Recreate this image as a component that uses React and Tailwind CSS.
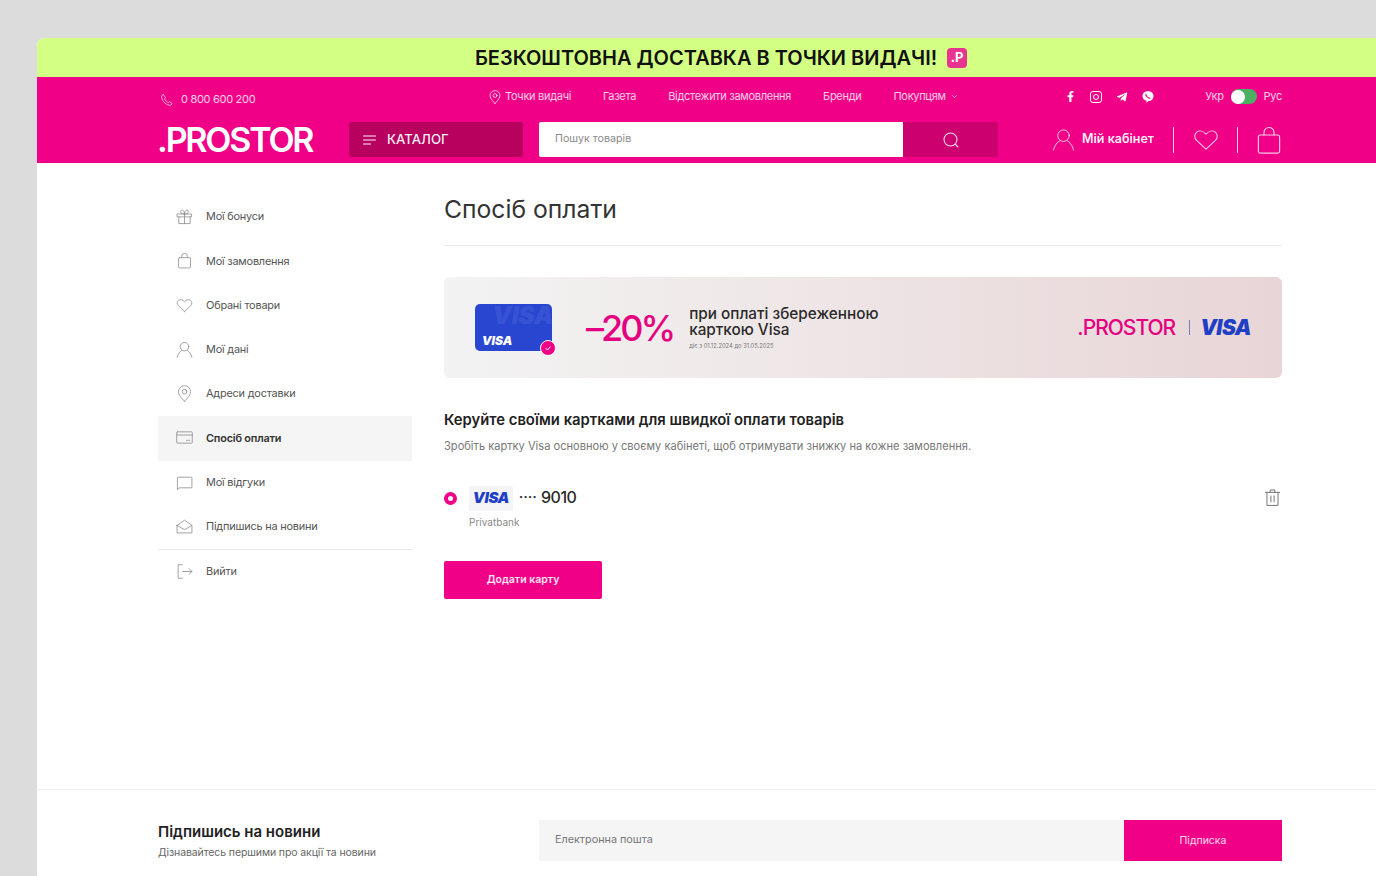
import React from "react";
import { FaFacebookF, FaTelegramPlane } from "react-icons/fa";
import { ChevronDown } from "lucide-react";

// Тонкие иконки: все рисуются в боксе 24x24, обводка берётся из currentColor
const Icon = ({ size = 18, sw = 1.2, className = "", children }) => (
  <svg
    width={size}
    height={size}
    viewBox="0 0 24 24"
    fill="none"
    stroke="currentColor"
    strokeWidth={sw}
    strokeLinecap="round"
    strokeLinejoin="round"
    className={className}
  >
    {children}
  </svg>
);

const GiftIcon = (p) => (
  <Icon {...p}>
    <path d="M2 8.500h20v4H2zM4 12.500V22h16v-9.500M12 8.500V22" />
    <path d="M12 8.500C9 8.500 6.500 7.500 6.500 5.200 6.500 3.500 8 2.500 9.300 3 11 3.700 12 6 12 8.500ZM12 8.500c3 0 5.500-1 5.500-3.300 0-1.700-1.500-2.700-2.800-2.200C13 3.700 12 6 12 8.500Z" />
  </Icon>
);
const BagIcon = (p) => (
  <Icon {...p}>
    <rect x="3.500" y="8" width="17" height="14.500" rx="1.500" />
    <path d="M8 8V6a4 4 0 0 1 8 0v2" />
  </Icon>
);
const HeartIcon = (p) => (
  <Icon {...p}>
    <path d="M12 20.500 3.300 12.300C.9 9.900 1.200 6.400 3.500 4.700c2.500-1.800 6-1.100 8.500 2 2.500-3.100 6-3.800 8.500-2 2.300 1.700 2.600 5.200.2 7.600L12 20.500Z" />
  </Icon>
);
const UserIcon = (p) => (
  <Icon {...p}>
    <circle cx="12" cy="8" r="6" />
    <path d="M1.500 23c1-4.500 4.500-9 6.300-9.500M22.500 23c-1-4.500-4.500-9-6.300-9.500" />
  </Icon>
);
const PinIcon = (p) => (
  <Icon {...p}>
    <path d="M12 23c-1.500-2-8.500-7.500-8.500-13.500a8.500 8.500 0 0 1 17 0C20.500 15.500 13.500 21 12 23Z" />
    <circle cx="12" cy="9.500" r="3.300" />
  </Icon>
);
const CardIcon = (p) => (
  <Icon {...p}>
    <rect x="1" y="4" width="22" height="16" rx="1" />
    <path d="M1 8.500h22M15 16h1.500M18 16h1.500" />
  </Icon>
);
const CommentIcon = (p) => (
  <Icon {...p}>
    <path d="M2 21.500V5.500a1 1 0 0 1 1-1h18.500a1 1 0 0 1 1 1v13a1 1 0 0 1-1 1H4.500L2 21.500Z" />
  </Icon>
);
const EnvelopeIcon = (p) => (
  <Icon {...p}>
    <path d="M1.500 10.500 12 3l10.500 7.500V21h-21V10.500Z" />
    <path d="m1.500 10.500 10.500 6 10.500-6" />
  </Icon>
);
const ExitIcon = (p) => (
  <Icon {...p}>
    <path d="M9 2.500H3V21.500h6M9.500 12h13M18.500 8l4 4-4 4" />
  </Icon>
);
const PhoneIcon = (p) => (
  <Icon {...p}>
    <path d="M5.500 2.500 3 5c-.8 3 .8 7.500 4.200 11s8 5.500 11.300 4.800l2.500-2.500-4.300-3.300-2.400 1.500c-2.500-1-5.500-4-6.500-6.500l1.500-2.400L5.500 2.500Z" />
  </Icon>
);
const TrashIcon = (p) => (
  <Icon {...p}>
    <path d="M3 5.500h18M5 5.500V22h14V5.500M9 5.500V2.500h6v3M10 10v7.500M14 10v7.500" />
  </Icon>
);

// Viber: залитый пузырь с трубкой цвета шапки
const ViberIcon = () => (
  <svg width="12" height="12" viewBox="0 0 12 12">
    <path
      fill="#fff"
      d="M6 .3c3.300 0 5.500 1.500 5.500 5 0 3-2 4.700-5 4.700l-2 1.700V9.700C1.700 9 .5 7.500.5 5.300.5 1.800 2.700.3 6 .3Z"
    />
    <path
      fill="none"
      stroke="#ef0087"
      strokeWidth="1.300"
      strokeLinecap="round"
      d="M3.900 3.300c.1 1.900 1.900 3.700 3.900 3.900"
    />
  </svg>
);

const menu = [
  { label: "Мої бонуси", icon: GiftIcon },
  { label: "Мої замовлення", icon: BagIcon },
  { label: "Обрані товари", icon: HeartIcon },
  { label: "Мої дані", icon: UserIcon },
  { label: "Адреси доставки", icon: PinIcon },
  { label: "Спосіб оплати", icon: CardIcon, active: true },
  { label: "Мої відгуки", icon: CommentIcon },
  { label: "Підпишись на новини", icon: EnvelopeIcon, divider: true },
  { label: "Вийти", icon: ExitIcon },
];

const VisaMark = ({ className }) => (
  <span className={`font-black italic tracking-tight text-[#1f3fc4] ${className}`}>VISA</span>
);

const TopBar = () => (
  <div className="flex h-[45px] items-center text-[11px] tracking-[-0.300px] text-white/80">
    <div className="flex w-[330px] items-center gap-[7px] pl-[2px]">
      <PhoneIcon size={14} sw={1.400} />
      <span>0 800 600 200</span>
    </div>
    <nav className="flex items-center gap-8 pb-[6px]">
      <a className="flex items-center gap-[3px]">
        <PinIcon size={14} sw={1.500} />
        Точки видачі
      </a>
      <a>Газета</a>
      <a>Відстежити замовлення</a>
      <a>Бренди</a>
      <a className="flex items-center gap-1">
        Покупцям
        <ChevronDown size={9} strokeWidth={2} />
      </a>
    </nav>
    <div className="ml-[106px] flex items-center gap-[14px] pb-[6px] text-white">
      <FaFacebookF size={11} />
      <span className="relative flex h-[12px] w-[12px] items-center justify-center rounded-[3px] border border-white">
        <span className="h-[6px] w-[6px] rounded-full border border-white" />
      </span>
      <FaTelegramPlane size={12} />
      <ViberIcon />
    </div>
    <div className="ml-auto flex items-center gap-[7px] pb-[6px]">
      <span>Укр</span>
      <span className="flex h-[15px] w-[26px] items-center rounded-full bg-[#4caf64]">
        <span className="h-[14px] w-[14px] rounded-full bg-white" />
      </span>
      <span>Рус</span>
    </div>
  </div>
);

const MainBar = () => (
  <div className="flex h-[35px] items-center">
    <div className="-ml-[1px] w-[192px] text-[34px] leading-none font-semibold tracking-[-2.200px] text-white">
      .PROSTOR
    </div>
    <button className="flex h-full w-[174px] items-center gap-[11px] rounded-[2px] bg-[#b8005f] pl-[14px] text-[13.200px] font-medium text-white/95">
      <svg width="13" height="10" viewBox="0 0 13 10" stroke="currentColor" strokeWidth="1.100" strokeLinecap="round">
        <path d="M.5 1h12M.5 5h12M.5 9h7" />
      </svg>
      КАТАЛОГ
    </button>
    <div className="ml-4 flex h-full w-[459px]">
      <div className="flex flex-1 items-center rounded-l-[2px] bg-white pl-4 text-[10.700px] text-[#8a8a8a]">
        Пошук товарів
      </div>
      <button className="flex w-[95px] items-center justify-center rounded-r-[2px] bg-[#cc006f] text-white/85">
        <svg width="18" height="18" viewBox="0 0 18 18" fill="none" stroke="currentColor" strokeWidth="1.100" strokeLinecap="round">
          <circle cx="8.500" cy="8.500" r="6.500" />
          <path d="m13.500 13.500 2.500 2.500" />
        </svg>
      </button>
    </div>
    <div className="-mr-[2px] ml-auto flex h-full items-center text-white/80">
      <UserIcon size={23} sw={1} />
      <span className="ml-[7px] text-[12.500px] font-semibold text-white/95">Мій кабінет</span>
      <span className="mx-[19px] h-[26px] w-px bg-white/80" />
      <HeartIcon size={26} sw={1} />
      <span className="mr-[16px] ml-[18px] h-[26px] w-px bg-white/80" />
      <BagIcon size={30} sw={0.900} />
    </div>
  </div>
);

const Sidebar = () => (
  <aside className="w-[254px] shrink-0 pt-[32px]">
    {menu.map(({ label, icon: MenuIcon, active, divider }) => (
      <div
        key={label}
        className={`flex items-center gap-[11px] pb-[1px] pl-[15px] text-[10.900px] tracking-[-0.200px] ${
          active ? "bg-[#f5f5f5] font-semibold text-[#333]" : "text-[#555]"
        } ${divider ? "h-[45px] border-b border-[#e9e9e9]" : "h-[44.250px]"}`}
      >
        <span className="flex w-[22px] justify-center text-[#8a8a8a]">
          <MenuIcon size={17} sw={1.100} />
        </span>
        {label}
      </div>
    ))}
  </aside>
);

const PromoBanner = () => (
  <div className="mt-[31px] flex h-[101px] items-center rounded-md bg-gradient-to-r from-[#f3f3f3] to-[#e8d5d7] px-[31px]">
    <div className="relative h-[47px] w-[77px] overflow-hidden rounded-[5px] bg-[#2846d0]">
      <span className="absolute -top-[6px] -right-[1px] text-[24px] font-black text-white/[0.07] italic">VISA</span>
      <span className="absolute bottom-[1px] left-[7px] text-[12px] font-black text-white italic">VISA</span>
    </div>
    <span className="relative mt-[40px] -ml-[12px] flex h-[16px] w-[16px] items-center justify-center rounded-full border border-white bg-[#ef0087] text-white">
      <svg width="8" height="8" viewBox="0 0 8 8" fill="none" stroke="currentColor" strokeWidth="1">
        <path d="m1.500 4 2 2 3-3.500" />
      </svg>
    </span>
    <div className="ml-[30px] text-[36px] leading-none font-medium tracking-[-3px] text-[#e5007f]">–20%</div>
    <div className="ml-[16px] text-[#2a2a2a]">
      <p className="text-[15.300px] leading-[16px] font-medium">
        при оплаті збереженною
        <br />
        карткою Visa
      </p>
      <p className="mt-[5px] text-[5.800px] leading-[6px] text-[#777]">діє з 01.12.2024 до 31.05.2025</p>
    </div>
    <div className="ml-auto flex items-center">
      <span className="text-[21px] font-medium tracking-[-1px] text-[#e5007f]">.PROSTOR</span>
      <span className="mr-[10px] ml-[14px] h-[15px] w-px bg-[#7b7fb5]" />
      <VisaMark className="text-[21px]" />
    </div>
  </div>
);

const SavedCard = () => (
  <div className="mt-[32px] flex items-start">
    <span className="mt-[6px] h-[13px] w-[13px] rounded-full border-[4px] border-[#ef0087] bg-white" />
    <div className="ml-3">
      <div className="flex items-center">
        <span className="flex h-[25px] w-[44px] items-center justify-center rounded-[2px] bg-[#f4f4f6]">
          <VisaMark className="text-[15px]" />
        </span>
        <span className="-mt-[3px] ml-[6px] flex items-center gap-[4px] text-[16px] font-medium tracking-[-0.500px] text-[#2a2a2a]">
          <span className="text-[11px] font-black tracking-[0.400px]">····</span>
          9010
        </span>
      </div>
      <p className="mt-[4px] text-[10px] text-[#8a8a8a]">Privatbank</p>
    </div>
    <TrashIcon size={19} sw={1.200} className="mt-[2px] ml-auto text-[#6f6f6f]" />
  </div>
);

const Content = () => (
  <main className="ml-8 flex-1 pt-[28px]">
    <h1 className="border-b border-[#ebebeb] pb-[18px] text-[24.700px] leading-[36px] font-normal text-[#333]">
      Спосіб оплати
    </h1>
    <PromoBanner />
    <h2 className="mt-[32px] text-[14.800px] leading-[20px] font-semibold text-[#222]">
      Керуйте своїми картками для швидкої оплати товарів
    </h2>
    <p className="mt-[8px] text-[11.100px] leading-[16px] text-[#777]">
      Зробіть картку Visa основною у своєму кабінеті, щоб отримувати знижку на кожне замовлення.
    </p>
    <SavedCard />
    <button className="mt-[31px] h-[38px] w-[158px] rounded-[2px] bg-[#ef0087] text-[10.500px] font-semibold text-white/90">
      Додати карту
    </button>
  </main>
);

const Subscribe = () => (
  <div className="flex border-t border-[#efefef] pt-[30px] pr-[94px] pl-[121px]">
    <div className="w-[381px]">
      <h3 className="mt-[1px] text-[15px] leading-[22px] font-semibold text-[#222]">Підпишись на новини</h3>
      <p className="mt-[2px] text-[10.500px] leading-[16px] tracking-[-0.100px] text-[#666]">
        Дізнавайтесь першими про акції та новини
      </p>
    </div>
    <div className="flex h-[41px] flex-1">
      <div className="flex flex-1 items-center bg-[#f5f5f5] pl-4 text-[10.800px] text-[#777]">Електронна пошта</div>
      <button className="w-[158px] bg-[#ef0087] text-[10.500px] text-white/85">Підписка</button>
    </div>
  </div>
);

export default function App() {
  return (
    <div className="h-[876px] overflow-hidden bg-[#dcdcdc] pt-[38px] pl-[37px] font-['Inter',sans-serif]">
      <div className="flex h-full flex-col overflow-hidden rounded-tl-lg bg-white">
        <div className="flex h-[39px] shrink-0 items-center justify-center gap-[10px] bg-[#d4ff85] pl-[29px] text-[20px] font-semibold text-[#111]">
          БЕЗКОШТОВНА ДОСТАВКА В ТОЧКИ ВИДАЧІ!
          <span className="flex h-[20px] w-[20px] items-center justify-center rounded-[4px] bg-[#e8348f] text-[13px] font-bold text-white">
            .P
          </span>
        </div>
        <header className="h-[86px] shrink-0 bg-[#ef0087] pr-[94px] pl-[121px]">
          <TopBar />
          <MainBar />
        </header>
        <div className="flex h-[626px] shrink-0 pr-[94px] pl-[121px]">
          <Sidebar />
          <Content />
        </div>
        <Subscribe />
      </div>
    </div>
  );
}
